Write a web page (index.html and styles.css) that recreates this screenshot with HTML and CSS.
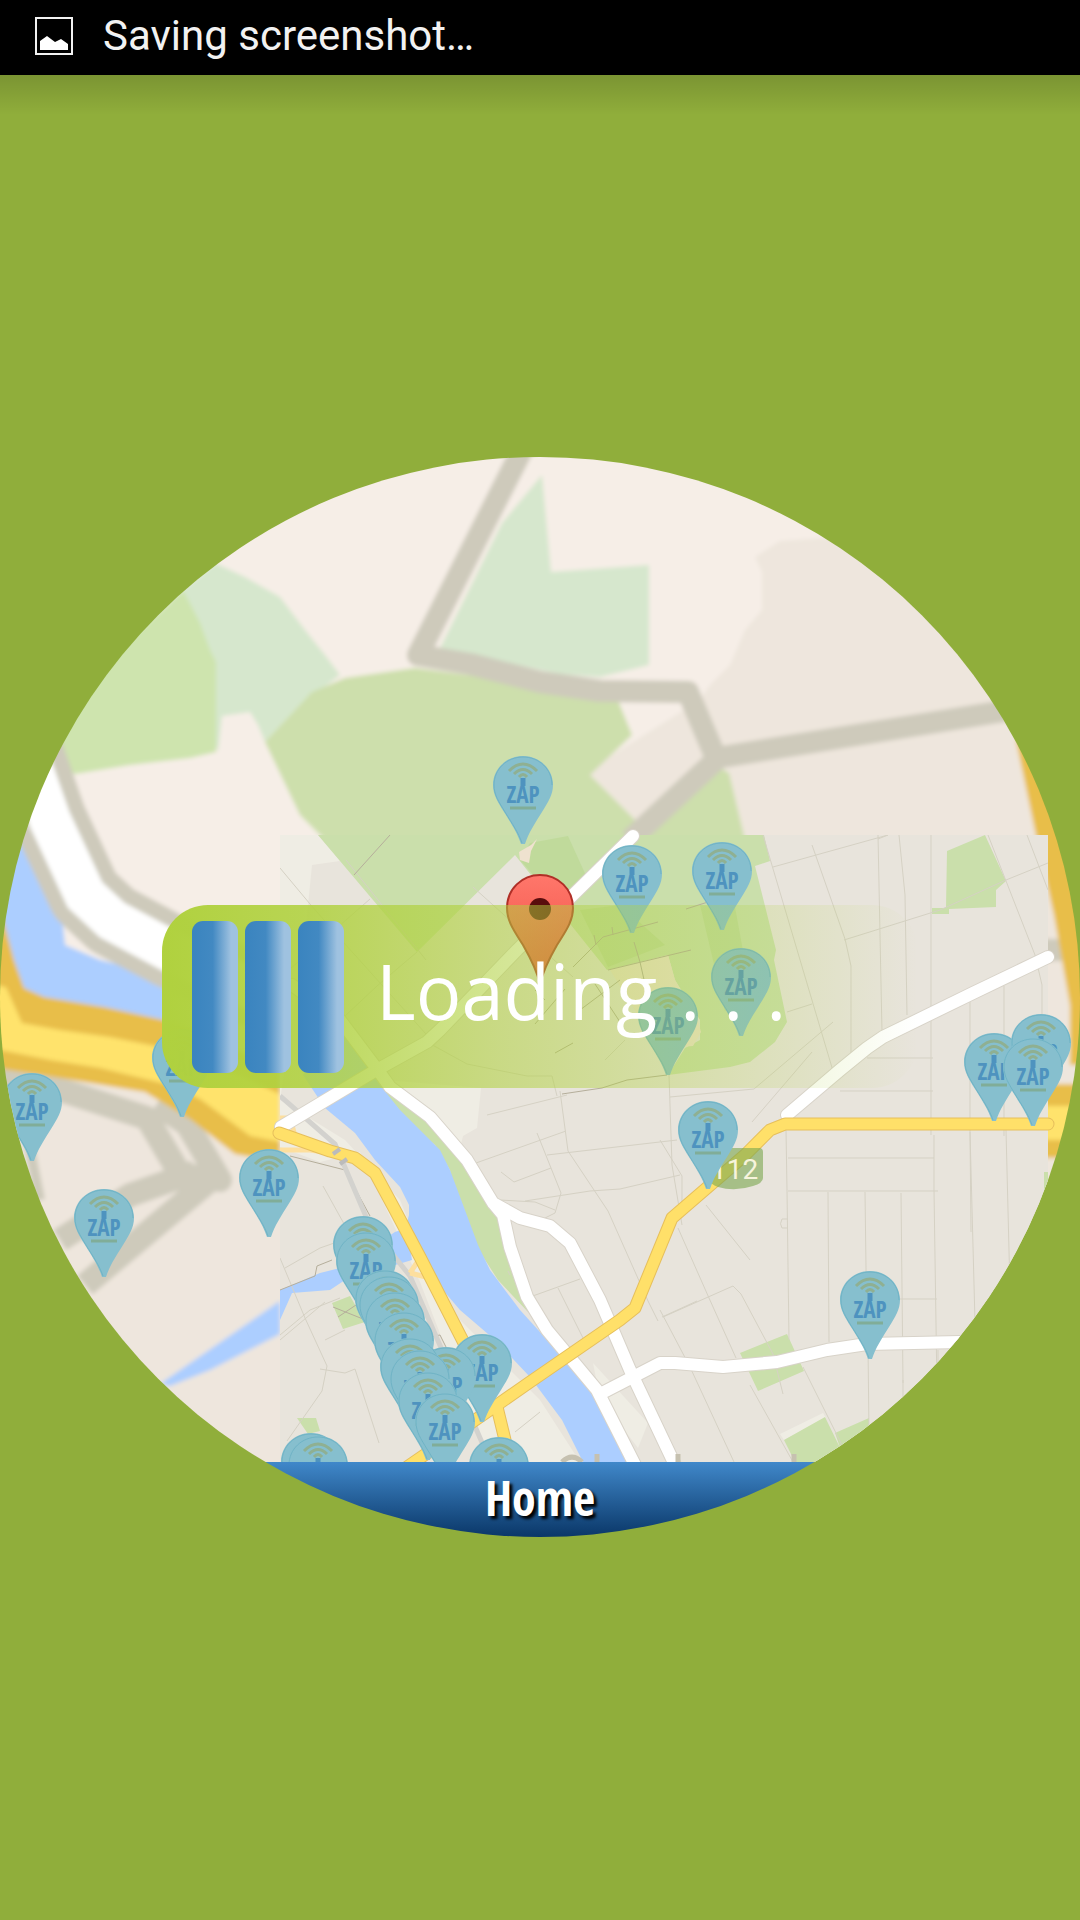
FILE: index.html
```
<!DOCTYPE html>
<html lang="en">
<head>
  <meta charset="UTF-8">
  <meta name="viewport" content="width=device-width, initial-scale=1.0">
  <title>ZAP Map</title>
  <link rel="stylesheet" href="styles.css">
</head>
<body>

  <header class="status-bar">
    <svg class="status-icon" viewBox="0 0 38 38" aria-hidden="true">
      <rect x="1" y="1" width="36" height="36" fill="none" stroke="#f2f2f2" stroke-width="2"/>
      <path d="M5 33V24l7-5 8 6 6-3 7 5v6z" fill="#fff"/>
    </svg>
    <span>Saving screenshot…</span>
  </header>

  <main class="screen">
    <div class="dial">
      <svg class="map" viewBox="0 457 1080 1005" preserveAspectRatio="xMidYMin slice" role="img" aria-label="Map of charging points">
        <defs>
          <filter id="soft" x="-5%" y="-5%" width="110%" height="110%"><feGaussianBlur stdDeviation="2"/></filter>
          <clipPath id="tile"><path d="M280 835h768v627H280z"/></clipPath>
          <linearGradient id="red" x1="0" y1="0" x2="0" y2="1">
            <stop offset="0" stop-color="#ff776b"/>
            <stop offset="1" stop-color="#ee4a3e"/>
          </linearGradient>
          <symbol id="pin" viewBox="0 0 60 88" overflow="visible">
            <path d="M30 0C13 0 0 13 0 29c0 10 5 17 11 27 8 13 13 20 17 32h4c4-12 9-19 17-32 6-10 11-17 11-27C60 13 47 0 30 0z" fill="#86bfce"/>
            <path d="M30 1C14 1 1 13 1 29c0 10 5 17 11 27 8 13 13 20 17 31" fill="none" stroke="#6fb3c5"/>
            <path d="M59 29C59 13 46 1 30 1" fill="none" stroke="#6fb3c5"/>
            <path d="M16 15q14-14 28 0M21 18q9-9 18 0M26 21q4-5 8 0" fill="none" stroke="#8fb092" stroke-width="3"/>
            <path d="M30 22v8" stroke="#4e93bf" stroke-width="5"/>
            <text x="30" y="47" class="pin-text">ZAP</text>
            <path d="M17 52h26" stroke="#80ad98" stroke-width="3"/>
          </symbol>
        </defs>

        <!-- low zoom background -->
        <g filter="url(#soft)">
          <path d="M-20 430h1120v1060H-20z" fill="#eee6dd"/>
          <path d="M0 430h860v105l-80 6-25 16 7 15v38l-17 20-15 35-20 20-10 15-240 150-260 240L0 1050z" fill="#f6eee7"/>
          <path d="M170 600l45-37 30 14 35 20 25 33 20 25 15 20-20 15-20 15-35 37-7-17-8-13-28 4-4 36z" fill="#d6e7cd"/>
          <path d="M183 590l17 33 10 27 6 12v90l-26 6-60 7-55 9-60-30z" fill="#cee4ae"/>
          <path d="M542 475l9 97 98-7v100l-49 12-40-3-120-26 62-125z" fill="#d6e7cd"/>
          <path d="M265 742l47-50 33-14 70-10 60 8 90 20 50-3 17 42-42 40 45 45v20H325l-25-25z" fill="#cddfac"/>
          <path d="M715 765l14 8 16 67H630z" fill="#cddfac"/>
          <path d="M10 800l15 35 20 30 15 35 5 45 35 15 40 10 25 17v45l-65-10-70-10-35-75z" fill="#acceff"/>
          <g fill="none" stroke="#cecabb" stroke-linejoin="round">
            <path d="M522 450L418 655l52 9 70 18 60 9 88 1 28 66 294-48M716 760l-86 80" stroke-width="22"/>
            <path d="M0 1075l67 17 80 26 33 56 40 6-33-56-30-20M215 1176L85 1285M195 1172l-65 23-70 45" stroke-width="24"/>
            <path d="M28 1140l12 60" stroke-width="10"/>
            <path d="M1040 950h22" stroke-width="22"/>
            <path d="M15 720l35 100 35 75 27 25 60 32 130 60" stroke-width="74"/>
          </g>
          <path d="M15 720l35 100 35 75 27 25 60 32 130 60" fill="none" stroke="#fff" stroke-width="42"/>
          <path d="M160 1384l55-38 65-45v33l-70 36-40 16z" fill="#acceff"/>
          <path d="M-5 915h7l12 45 10 28 20 9 60 10 60 13 40 12 76 40v90l-45-8-45-35-45-27-60-10-90-14z" fill="#e8be4a"/>
          <path d="M-5 985l11 2 16 36 38 7 50 7 60 12 55 20 55 25v48l-30-6-50-37-30-14-70-17-50-8-55-11zM1040 1106h50v34h-50z" fill="#ffe36c"/>
          <path d="M1016 740l20 95 18 80 16 90v60h30V740z" fill="#e8be4a"/>
          <path d="M1040 1084h50v22h-50zM1040 1140h50v18h-50z" fill="#e8be4a"/>
        </g>

        <!-- detailed tile -->
        <g clip-path="url(#tile)">
          <path d="M280 835h768v627H280z" fill="#e8e4dc"/>
          <g fill="#efede4">
            <path d="M280 835h38l22 26-28 4-8 80-24 155 65 40 55 60 40 100 100 100 40 62H490l-70-180-60-130-40 10-40-15z"/>
            <path d="M385 1080l96 8-4 40-14 8-6 24-72-60zM593 1363l55 60-10 25-38-50zM780 1434l43-21 3 5-42 22z"/>
          </g>
          <g fill="#cadfab">
            <path d="M318 835l99 117 98-97 92 115 61-15 7 25 25 40v20l-15 8-17 27 62-8 20-5 25-20 12-20-13-62 2-10-21-84 15-5-6-26z"/>
            <path d="M375 1082l25 33 35 30 15 25 3 20 14 32 13 30 18 28 30 32-13-42-20-60-25-45-50-50z"/>
            <path d="M947 851l38-16 21 46-10 9v17l-47 2v5h-17v-6h14zM740 1353l47-19 17 37-46 20zM784 1440l41-23 22 45h-52zM835 1433l34-15v14l-24 30zM332 1303l18-7 15 26-22 7zM297 1418h19l4 13-12 3zM1044 1172h4v30h-4z"/>
          </g>
          <path d="M530 843l38-7 20 44-28 25-40-45zM580 910l40-5 45 40-57 22zM700 905l35 2 15 82-25 22z" fill="#c0da9b"/>
          <path d="M610 970l58-15 7 25 22 38 4 14-8 14-25 2-22-20zM519 852l12-7 6-6-6 12-2 12-9-3z" fill="#efe2cf"/>
          <path d="M303 1075l27-48 15 10 35 48 20 25 40 40 10 20 28 75 12 25 30 40 50 55 30 35 27 62h-44l-21-42-32-43-35-37-35-30-30-35-25-45 4-15v-10l-9-18-25-27-20-27-30-25z" fill="#acceff"/>
          <path d="M280 1290l40-17 20-5 55-36 12-4 5 32-67 20-15 10-38 3-12 27z" fill="#acceff"/>

          <!-- small streets -->
          <g fill="none" stroke="#d5d1c4">
            <path d="M763 835l70 236M773 867l115-32M844 940l96-30 66-30 42-17M878 835l2 100 2 97M899 835l6 60 2 120M931 835v300M988 835l47 120 7 30v75M1027 835l21 55"/>
            <path d="M888 835l-10 4M812 845l33 94 6 27v90M670 1097l84-8 79-67M669 1075l3 90 10 60M867 1058h66M787 1012l25-8M812 1052l-60 70M970 1002v130l1 100M1004 986v150M840 1091h93"/>
            <path d="M934 1135v55l3 200M786 1130l1 60 2 150M788 1158h146M788 1191h150M828 1192l1 150M865 1192l2 150M901 1193l2 190M970 1132l5 190M1006 1130l4 160M868 1345l1 90M903 1380v60M938 1350v30M900 1299h37M788 1219h-6q-3 5 0 9h6"/>
            <path d="M660 1140l22 36v28M706 1205l44 55M678 1228l31 70 27 60M663 1317l70-31 8 8 32 60 10 40M660 1310l30 57 44 95M750 1385l43 77M803 1367l36 72 9 20M680 1175l-60 14-30 2-65 10"/>
            <path d="M560 1091l8 60 20 30 20 30 40 90 10 20M476 1163l90-32M537 1133l24 60-6 20-12 6M500 1200l35 2 20 8M501 1172l13 10 37-14M547 1155l130-15M530 1297l50-18M558 1288l30 60M662 1317l35-16M510 1275l-2-4"/>
            <path d="M280 868l30 36 35 40 90 100M346 860l80 100M417 952l-40 34-32 30M370 899l-80 70M473 887l100 90M427 1042l40 22 60 12h25l5 20M567 1095l-80 20M625 1040l-20 20"/>
            <path d="M280 1258l25 60 22 48-5 25-35 50M280 1335l30-25 30-12M323 1186l25 45M285 1268l35-20 20-7M280 1340l45-38M320 1369l25 4 10-4 24 74M325 1340l20-10M515 1432l25-20"/>
          </g>
          <g fill="none" stroke="#b5ae9b">
            <path d="M354 875l36-40M562 1094l40-6 25-8 40-5M573 967l30-30 55-15M608 970l83-20M686 909l22-7M634 942l6 20 5 22M613 935l-1-8M596 945l-2-10M290 1156l55 14 25 46M280 1290l35-14 2-10 15-6M535 1024l30-35M595 984l25 38M545 1000l-10-10M580 1010l40-30M555 1053l18-10M430 1337l10-2 40 80M333 1307l30 12M338 1317l18-12"/>
          </g>
          <path d="M280 1096l55 48 35 82 40 50 80 185" fill="none" stroke="#d3d2ce" stroke-width="5"/>
          <path d="M280 1150h30l20 3M280 1118h10l5 18 20 15M410 1273l8-12 3-8 M410 1273l20 5 20 35" fill="none" stroke="#fddf9e" stroke-width="5"/>
        </g>

        <!-- main roads -->
        <g fill="none" stroke-linejoin="round" stroke-linecap="round">
          <path class="road-edge" d="M281 1127l92-55 54-30 13-12 77-80 116-114M292 985l48 35 40 53 10 14 40 30 37 43 26 43 10 12 7 32 17 50 20 33 50 60 38 75M493 1203l27 15 30 8 20 17 30 57 30 70 45 95M600 1394l60-31h15l48 4 54-5 50-12 40-6 93-2h90M1048 957l-75 36-90 44-16 11-27 22-53 45"/>
          <path class="road" d="M281 1127l92-55 54-30 13-12 77-80 116-114M292 985l48 35 40 53 10 14 40 30 37 43 26 43 10 12 7 32 17 50 20 33 50 60 38 75M493 1203l27 15 30 8 20 17 30 57 30 70 45 95M600 1394l60-31h15l48 4 54-5 50-12 40-6 93-2h90M1048 957l-75 36-90 44-16 11-27 22-53 45"/>
          <path class="highway-edge" d="M279 1133l51 18 25 7 20 15 20 37 25 47 45 88M1048 1124H785l-15 6-25 25-73 63-37 90-15 12-90 62-33 23-90 62M497 1407l8 33 5 30"/>
          <path class="highway" d="M279 1133l51 18 25 7 20 15 20 37 25 47 45 88M1048 1124H785l-15 6-25 25-73 63-37 90-15 12-90 62-33 23-90 62M497 1407l8 33 5 30"/>
        </g>
        <path d="M333 1154l7-5M340 1164l7-5" stroke="#bbb" stroke-width="4"/>
        <path d="M714 1148h45q4 0 4 4v26q0 5-10 8-18 6-35 1-8-3-8-7v-28q0-4 4-4z" fill="#79a64e" fill-opacity="0.6"/>
        <text x="711" y="1179" class="route">112</text>
        <path d="M562 1462q10-10 20 0M597 1454v8M678 1454v8M794 1454v8" fill="none" stroke="#c6c1b0" stroke-width="5"/>

        <!-- charging points -->
        <g id="pins"></g>

        <!-- current position -->
        <path d="M540 875c-18 0-33 14-33 33 0 14 8 24 16 37 8 14 14 26 17 39 3-13 9-25 17-39 8-13 16-23 16-37 0-19-15-33-33-33z" fill="url(#red)" stroke="#b02f27" stroke-width="2"/>
        <circle cx="540" cy="909" r="11" fill="#590d0d"/>
      </svg>

      <a class="home" href="#">Home</a>

      <div class="loading" role="status">
        <div class="bars">
          <span class="bar"></span>
          <span class="bar"></span>
          <span class="bar"></span>
        </div>
        <div class="loading-text">
          <span>Loading</span>
          <span>.</span>
          <span>.</span>
          <span>.</span>
        </div>
      </div>
    </div>
  </main>

  <script>
    // top left corner of every pin, back to front
    const points = [
      [493, 756], [602, 845], [692, 842], [711, 948], [638, 987], [678, 1101],
      [840, 1271], [964, 1033], [1011, 1014], [1003, 1038], [2, 1073], [74, 1189],
      [239, 1149], [152, 1029], [333, 1216], [336, 1232], [355, 1270], [359, 1276],
      [365, 1292], [374, 1312], [452, 1334], [416, 1347], [380, 1338], [390, 1350],
      [398, 1372], [415, 1393], [469, 1437], [281, 1433], [288, 1436]
    ];
    const pins = document.getElementById("pins");

    points.forEach(([x, y]) => {
      const pin = document.createElementNS("http://www.w3.org/2000/svg", "use");
      pin.setAttribute("href", "#pin");
      pin.setAttribute("x", x);
      pin.setAttribute("y", y);
      pin.setAttribute("width", 60);
      pin.setAttribute("height", 88);
      pins.appendChild(pin);
    });
  </script>

</body>
</html>
```

FILE: styles.css
```
* {
  box-sizing: border-box;
}
body {
  display: flex;
  flex-direction: column;
  min-height: 100vh;
  margin: 0;
  background-color: #90ae3b;
  font-family: Roboto, "Noto Sans", sans-serif;
}
.status-bar {
  display: flex;
  align-items: center;
  gap: 30px;
  height: 75px;
  padding: 0 35px 4px;
  background-color: #000;
  color: #f2f2f2;
  font-size: 42px;
}
.status-icon {
  width: 38px;
  height: 38px;
}
.screen {
  flex: 1;
  display: flex;
  align-items: center;
  padding-bottom: 1px;
  background: linear-gradient(rgba(0, 0, 0, 0.15), transparent 40px);
}

/* Round map */
.dial {
  position: relative;
  display: flex;
  flex-direction: column;
  width: 100%;
  aspect-ratio: 1;
  border-radius: 50%;
  overflow: hidden;
}
.map {
  flex: 1;
  min-height: 0;
  width: 100%;
}
.road-edge { stroke: #d8d3c9; stroke-width: 14px; }
.road { stroke: #fff; stroke-width: 12px; }
.highway-edge { stroke: #e6bf5c; stroke-width: 13px; }
.highway { stroke: #ffe069; stroke-width: 11px; }
.route {
  fill: #f7f4dc;
  font-size: 28px;
}
.pin-text {
  fill: #4e93bf;
  font-family: "Open Sans Condensed", "Liberation Sans Narrow", sans-serif;
  font-size: 23px;
  font-weight: bold;
  text-anchor: middle;
}
.home {
  display: flex;
  justify-content: center;
  align-items: center;
  height: 75px;
  padding-bottom: 4px;
  background: linear-gradient(#4088ca, #0a3768);
  color: #fff;
  font-family: "Open Sans Condensed", "Roboto Condensed", "Liberation Sans Narrow", "Liberation Sans", sans-serif;
  font-size: 48px;
  font-weight: bold;
  text-decoration: none;
  text-shadow: 3px 3px 3px #000;
}

/* Loading overlay */
.loading {
  position: absolute;
  top: 448px;
  left: 15%;
  display: flex;
  align-items: center;
  gap: 32px;
  width: 70%;
  height: 183px;
  padding-left: 30px;
  border-radius: 46px;
  background: linear-gradient(to right, #b0d13e, rgba(176, 209, 62, 0.88) 18%, rgba(176, 209, 62, 0.55) 45%, rgba(176, 209, 62, 0.25) 75%, rgba(176, 209, 62, 0));
}
.bars {
  display: flex;
  gap: 7px;
}
.bar {
  width: 46px;
  height: 152px;
  border-radius: 11px;
  background: linear-gradient(to right, #3a84bf, #4289c2 45%, #9fc2e0 85%, #9fc2e0);
}
.loading-text {
  display: flex;
  gap: 23px;
  padding-bottom: 12px;
  color: #fff;
  font-family: "Open Sans", "Noto Sans", sans-serif;
  font-size: 76px;
  font-weight: 500;
  line-height: 1;
  white-space: nowrap;
}
```
